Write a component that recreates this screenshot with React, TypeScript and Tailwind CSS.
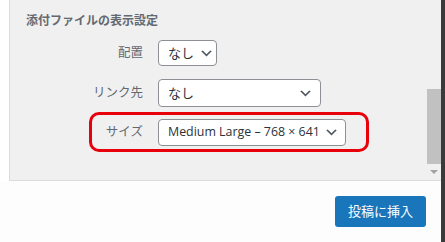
import React from "react";

const jp = "font-['Open_Sans','Noto_Sans_CJK_JP',sans-serif]";

function Chevron() {
  return (
    <svg viewBox="0 0 20 20" className="h-[15px] w-[15px] shrink-0 text-[#50575e]" fill="currentColor">
      <path d="M5 6l5 5 5-5 2 1-7 7-7-7 2-1z" />
    </svg>
  );
}

function FakeSelect({ value, className }: { value: string; className: string }) {
  return (
    <div
      className={
        "flex items-center justify-between rounded-[4px] border border-[#8c8f94] bg-white pl-[9px] text-[#2c3338] " +
        className
      }
    >
      <span className="whitespace-nowrap leading-none">{value}</span>
      <Chevron />
    </div>
  );
}

const rows = [
  { label: "配置", value: "なし", box: "h-[26px] w-[59px] pr-[4px] gap-[5px] text-[13px]" },
  { label: "リンク先", value: "なし", box: "h-[28px] w-[163px] pr-[7px] text-[13px]" },
];

export default function App() {
  return (
    <div className={"flex h-[242px] w-[445px] bg-white " + jp}>
      <div className="flex w-[441px] flex-col">
        <div className="flex h-[181px] pl-[9px]">
          <div className="flex flex-1 border-b border-l border-[#dcdcde] bg-[#f0f0f1]">
            <div className="flex-1 pl-[16px] pt-[13px]">
              <h2 className="text-[12px] font-semibold leading-[16px] text-[#646970]">添付ファイルの表示設定</h2>
              <div className="mt-[11px] flex flex-col gap-[13px]">
                {rows.map((r) => (
                  <div key={r.label} className="flex items-center gap-[15px]">
                    <span className="w-[117px] text-right text-[12.5px] text-[#646970]">{r.label}</span>
                    <FakeSelect value={r.value} className={r.box} />
                  </div>
                ))}
                <div className="relative -mt-[1px] flex items-center gap-[15px]">
                  <span className="w-[117px] text-right text-[12.5px] text-[#646970]">サイズ</span>
                  <FakeSelect value="Medium Large – 768 × 641" className="h-[27px] w-[188px] pr-[6px] text-[12.4px]" />
                  <div className="pointer-events-none absolute -top-[7px] left-[63px] h-[40px] w-[280px] rounded-[10px] border-[3.5px] border-[#e8000b]" />
                </div>
              </div>
            </div>
            <div className="flex w-[14px] flex-col items-center bg-[#f0f0f0]">
              <div className="mt-[89px] h-[75px] w-full bg-[#c1c1c1]" />
              <div className="mt-[6px] h-0 w-0 border-x-[4px] border-t-[4px] border-x-transparent border-t-[#a3a3a3]" />
            </div>
          </div>
        </div>
        <div className="flex flex-1 justify-end bg-[#fdfdfd] pr-[15px] pt-[15px]">
          <button className="h-[31px] w-[91px] rounded-[3px] bg-[#1a76ba] text-[13px] text-white">投稿に挿入</button>
        </div>
      </div>
      <div className="w-[4px] bg-[#3a3a3a]" />
    </div>
  );
}
